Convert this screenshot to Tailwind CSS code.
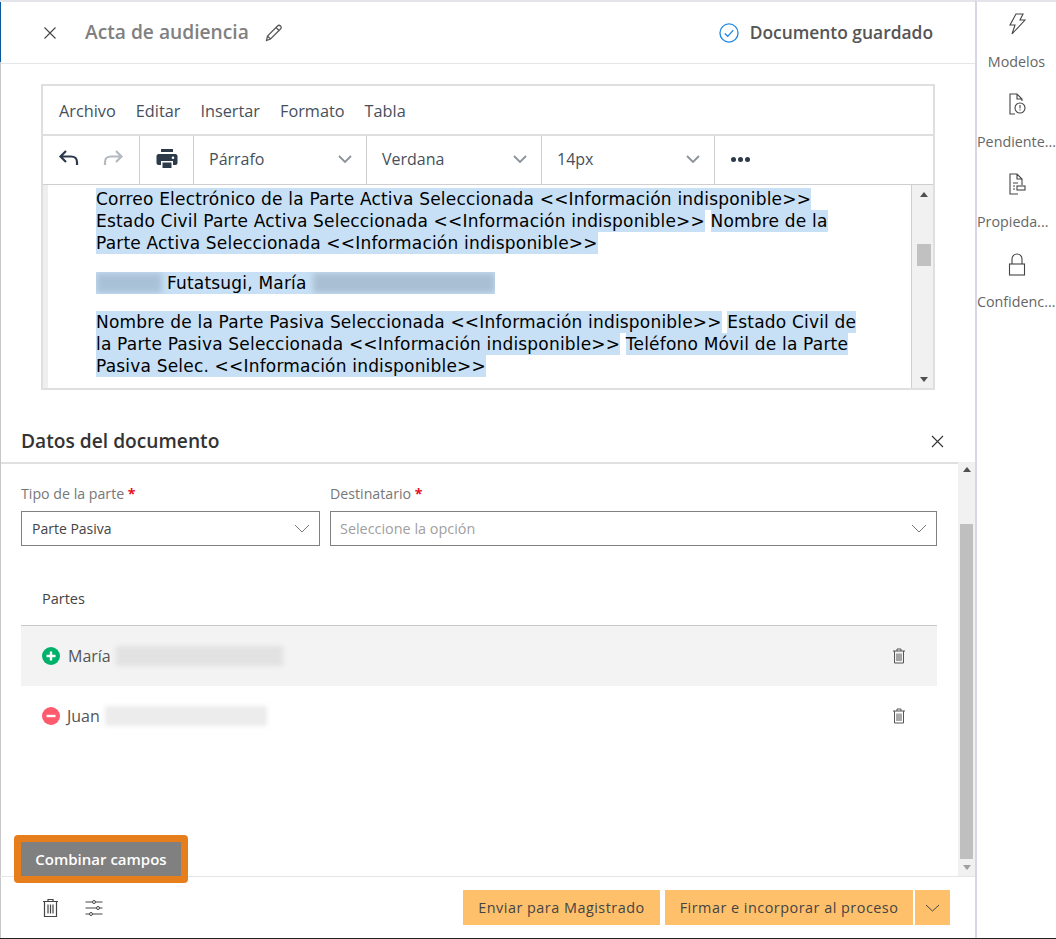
<!DOCTYPE html>
<html lang="es">
<head>
  <meta charset="UTF-8" />
  <title>Acta de audiencia</title>
  <script src="https://cdn.jsdelivr.net/npm/@tailwindcss/browser@4"></script>
</head>
<body class="bg-white">
<div class="flex h-[939px] w-[1056px] overflow-hidden border-b border-[#222] font-['Open_Sans',sans-serif]">

  <!-- Columna principal -->
  <div class="relative flex h-full w-[975px] flex-col border-t-2 border-t-[#e4e4ea]">
    <div class="absolute left-0 top-0 h-[60px] w-px bg-[#0a5a9c]"></div>
    <div class="absolute left-0 top-[60px] h-[877px] w-px bg-[#c8c8c8]"></div>

    <!-- Header -->
    <header class="flex h-[62px] shrink-0 items-center border-b border-[#e6e6e6] pl-[43px] pr-[42px]">
      <svg class="h-[14px] w-[14px]" viewBox="0 0 14 14" fill="none" stroke="#444" stroke-width="1.1"><path d="M1.5 1.5l11 11M12.5 1.5l-11 11"/></svg>
      <span class="ml-[28px] text-[19.2px] font-semibold text-[#808080]">Acta de audiencia</span>
      <svg class="ml-[16px] h-[18px] w-[18px]" viewBox="0 0 18 18" fill="none" stroke="#555" stroke-width="1.2"><path d="M1.5 16.5l1-4.5L12.5 2c1-1 2-1 3 0s1 2 0 3l-10 10zM2.5 12l3 3M11 3.5l3.5 3.5"/></svg>
      <svg class="ml-auto h-[20px] w-[20px]" viewBox="0 0 21 21" fill="none" stroke="#1e88e5" stroke-width="1.4"><circle cx="10.5" cy="10.5" r="9.5"/><path d="M6 11l3.200 3L15 7.500"/></svg>
      <span class="ml-[11px] text-[17.4px] font-semibold text-[#555]">Documento guardado</span>
    </header>

    <!-- Editor -->
    <section class="ml-[41px] mt-[20px] flex h-[306px] w-[894px] shrink-0 flex-col border-2 border-[#dfdfdf]">
      <nav class="flex h-[50px] shrink-0 items-center gap-[20px] border-b-2 border-[#dfdfdf] pl-[16px] pt-[2px] text-[16.3px] text-[#46505c]">
        <span>Archivo</span><span>Editar</span><span>Insertar</span><span>Formato</span><span>Tabla</span>
      </nav>
      <div class="flex h-[49px] shrink-0 items-center border-b border-[#cfcfcf] text-[16px] text-[#46505c]">
        <div class="flex h-full w-[97px] items-center gap-[22px] border-r border-[#cfcfcf] pb-[2px] pl-[15px]">
          <svg class="h-[22px] w-[22px]" viewBox="0 0 22 22" fill="none" stroke="#2c3a4a" stroke-width="2.2"><path d="M8 3L2.500 8.500 8 14M3 8.500h10c4 0 6 2.500 6 5.500v3"/></svg>
          <svg class="h-[22px] w-[22px]" viewBox="0 0 22 22" fill="none" stroke="#b4bac0" stroke-width="2.2"><path d="M14 3l5.500 5.500L14 14M19 8.500H9c-4 0-6 2.500-6 5.500v3"/></svg>
        </div>
        <div class="flex h-full w-[54px] items-center justify-center border-r border-[#cfcfcf] pb-[2px]">
          <svg class="h-[24px] w-[24px]" viewBox="0 0 24 24" fill="#2c3a4a"><path d="M6 2h12v3H6zM3.500 7h17c1 0 2 1 2 2v7c0 1-1 2-2 2H18v-4H6v4H3.500c-1 0-2-1-2-2V9c0-1 1-2 2-2zM7.500 15.500h9V21h-9zM18 9.500a1.300 1.300 0 100 2.600 1.300 1.300 0 000-2.600z"/></svg>
        </div>
        <div class="flex h-full w-[173px] items-center justify-between border-r border-[#cfcfcf] pb-[2px] pl-[15px] pr-[14px]">
          <span>Párrafo</span>
          <svg class="h-[10px] w-[14px]" viewBox="0 0 14 10" fill="none" stroke="#8a929a" stroke-width="1.800"><path d="M1 2l6 6 6-6"/></svg>
        </div>
        <div class="flex h-full w-[175px] items-center justify-between border-r border-[#cfcfcf] pb-[2px] pl-[15px] pr-[14px]">
          <span>Verdana</span>
          <svg class="h-[10px] w-[14px]" viewBox="0 0 14 10" fill="none" stroke="#8a929a" stroke-width="1.800"><path d="M1 2l6 6 6-6"/></svg>
        </div>
        <div class="flex h-full w-[173px] items-center justify-between border-r border-[#cfcfcf] pb-[2px] pl-[15px] pr-[14px]">
          <span>14px</span>
          <svg class="h-[10px] w-[14px]" viewBox="0 0 14 10" fill="none" stroke="#8a929a" stroke-width="1.800"><path d="M1 2l6 6 6-6"/></svg>
        </div>
        <div class="flex items-center gap-[2px] pb-[2px] pl-[16px]">
          <span class="h-[5px] w-[5px] rounded-full bg-[#2c3a4a]"></span>
          <span class="h-[5px] w-[5px] rounded-full bg-[#2c3a4a]"></span>
          <span class="h-[5px] w-[5px] rounded-full bg-[#2c3a4a]"></span>
        </div>
      </div>
      <div class="flex min-h-0 flex-1">
        <div class="flex-1 overflow-hidden border-l-[5px] border-[#efefef] pl-[48px] pt-[3px] font-['DejaVu_Sans',sans-serif] text-[17px] leading-[22px] tracking-[0.19px] text-black">
          <p><span class="bg-[#c8e0f6] py-px">Correo Electrónico de la Parte Activa Seleccionada &lt;&lt;Información indisponible&gt;&gt;</span><br><span class="bg-[#c8e0f6] py-px">Estado Civil Parte Activa Seleccionada &lt;&lt;Información indisponible&gt;&gt;</span> <span class="bg-[#c8e0f6] py-px">Nombre de la</span><br><span class="bg-[#c8e0f6] py-px">Parte Activa Seleccionada &lt;&lt;Información indisponible&gt;&gt;</span></p>
          <div class="mt-[18px] flex h-[22px] w-[399px] items-center overflow-hidden bg-[#c8e0f6]">
            <span class="h-[20px] w-[66px] shrink-0 bg-[#a9c1d6] blur-[3px]"></span>
            <span class="ml-[5px] shrink-0">Futatsugi, María</span>
            <span class="ml-[6px] h-[20px] flex-1 bg-[#a9bfd2] blur-[3px]"></span>
          </div>
          <p class="mt-[17px]"><span class="bg-[#c8e0f6] py-px">Nombre de la Parte Pasiva Seleccionada &lt;&lt;Información indisponible&gt;&gt;</span> <span class="bg-[#c8e0f6] py-px">Estado Civil de</span><br><span class="bg-[#c8e0f6] py-px">la Parte Pasiva Seleccionada &lt;&lt;Información indisponible&gt;&gt;</span> <span class="bg-[#c8e0f6] py-px">Teléfono Móvil de la Parte</span><br><span class="bg-[#c8e0f6] py-px">Pasiva Selec. &lt;&lt;Información indisponible&gt;&gt;</span></p>
        </div>
        <div class="flex w-[22px] shrink-0 flex-col items-center border-l border-[#cfcfcf] bg-[#f1f1f1] pl-[3px]">
          <span class="mt-[7px] h-0 w-0 border-x-[4px] border-b-[5px] border-x-transparent border-b-[#505050]"></span>
          <span class="mt-[47px] h-[22px] w-[14px] bg-[#c1c1c1]"></span>
          <span class="mt-auto mb-[6px] h-0 w-0 border-x-[4px] border-t-[5px] border-x-transparent border-t-[#505050]"></span>
        </div>
      </div>
    </section>

    <!-- Datos del documento -->
    <div class="mt-[31px] flex h-[41px] shrink-0 items-center justify-between pl-[21px] pr-[31px]">
      <h2 class="text-[19.2px] font-semibold text-[#333]">Datos del documento</h2>
      <svg class="h-[13px] w-[13px]" viewBox="0 0 13 13" fill="none" stroke="#333" stroke-width="1.100"><path d="M1 1l11 11M12 1L1 12"/></svg>
    </div>
    <div class="flex min-h-0 flex-1">
      <div class="flex-1 border-t-2 border-[#e0e0e0] pl-[21px] pr-[21px] pt-[20px]">
        <div class="flex gap-[10px]">
          <div class="w-[299px]">
            <label class="block text-[14.2px] leading-[20px] text-[#777]">Tipo de la parte <span class="font-bold text-[#e81123]">*</span></label>
            <div class="mt-[7px] flex h-[35px] items-center justify-between border border-[#808080] pl-[10px] pr-[9px] text-[14px] text-[#444]">
              <span>Parte Pasiva</span>
              <svg class="h-[10px] w-[16px]" viewBox="0 0 16 10" fill="none" stroke="#777" stroke-width="1"><path d="M1 1l7 7 7-7"/></svg>
            </div>
          </div>
          <div class="w-[607px]">
            <label class="block text-[14.2px] leading-[20px] text-[#777]">Destinatario <span class="font-bold text-[#e81123]">*</span></label>
            <div class="mt-[7px] flex h-[35px] items-center justify-between border border-[#808080] pl-[9px] pr-[9px] text-[14.4px] text-[#a0a0a0]">
              <span>Seleccione la opción</span>
              <svg class="h-[10px] w-[16px]" viewBox="0 0 16 10" fill="none" stroke="#777" stroke-width="1"><path d="M1 1l7 7 7-7"/></svg>
            </div>
          </div>
        </div>
        <div class="mt-[35px] flex h-[36px] items-center pl-[21px] text-[14.5px] font-medium text-[#444]">Partes</div>
        <div class="mt-[8px] w-[916px] border-t border-[#c8c8c8]">
          <div class="flex h-[60px] items-center bg-[#f3f3f3] pl-[21px] pr-[31px]">
            <svg class="h-[18px] w-[18px]" viewBox="0 0 18 18"><circle cx="9" cy="9" r="9" fill="#00b16a"/><path d="M9 4.500v9M4.500 9h9" stroke="#fff" stroke-width="2.400"/></svg>
            <span class="ml-[8px] text-[16px] text-[#555]">María</span>
            <span class="ml-[5px] h-[20px] w-[167px] bg-[#e2e2e2] blur-[2px]"></span>
            <svg class="ml-auto h-[16px] w-[14px]" viewBox="0 0 14 16" fill="none" stroke="#555" stroke-width="1"><path d="M1 3h12M5 3V1h4v2M2.500 3v12h9V3M5 5.500v7.500M7 5.500v7.500M9 5.500v7.500"/></svg>
          </div>
          <div class="flex h-[60px] items-center pl-[21px] pr-[31px]">
            <svg class="h-[18px] w-[18px]" viewBox="0 0 18 18"><circle cx="9" cy="9" r="9" fill="#ff5b6e"/><path d="M4.500 9h9" stroke="#fff" stroke-width="2.400"/></svg>
            <span class="ml-[7px] text-[16px] text-[#555]">Juan</span>
            <span class="ml-[5px] h-[20px] w-[162px] bg-[#ececec] blur-[2px]"></span>
            <svg class="ml-auto h-[16px] w-[14px]" viewBox="0 0 14 16" fill="none" stroke="#555" stroke-width="1"><path d="M1 3h12M5 3V1h4v2M2.500 3v12h9V3M5 5.500v7.500M7 5.500v7.500M9 5.500v7.500"/></svg>
          </div>
        </div>
      </div>
      <div class="flex w-[17px] shrink-0 flex-col items-center bg-[#f1f1f1]">
        <span class="mt-[5px] h-0 w-0 border-x-[4px] border-b-[5px] border-x-transparent border-b-[#505050]"></span>
        <span class="mt-[52px] h-[335px] w-[13px] bg-[#bfbfbf]"></span>
        <span class="mt-[6px] h-0 w-0 border-x-[4px] border-t-[5px] border-x-transparent border-t-[#a0a0a0]"></span>
      </div>
    </div>

    <!-- Footer -->
    <footer class="relative flex h-[62px] shrink-0 items-center border-t border-[#e6e6e6] pl-[42px] pr-[25px]">
      <svg class="h-[20px] w-[17px]" viewBox="0 0 17 20" fill="none" stroke="#444" stroke-width="1.200"><path d="M1 3.500h15M6 3.500V1.500h5v2M2.500 3.500v15h12v-15M6 6.500v9M8.500 6.500v9M11 6.500v9"/></svg>
      <svg class="ml-[26px] h-[18px] w-[18px]" viewBox="0 0 18 18" fill="none" stroke="#444" stroke-width="1"><path d="M0.500 3h7M10.500 3h7M0.500 9h11M14.500 9h3M0.500 15h4M7.500 15h10"/><circle cx="9" cy="3" r="1.500"/><circle cx="13" cy="9" r="1.500"/><circle cx="6" cy="15" r="1.500"/></svg>
      <div class="ml-auto flex gap-[5px] text-[14.4px] font-medium tracking-[0.5px] text-[#444]">
        <button class="flex h-[35px] w-[197px] items-center justify-center bg-[#ffc06c]">Enviar para Magistrado</button>
        <div class="flex gap-[2px]">
          <button class="flex h-[35px] w-[248px] items-center justify-center bg-[#ffc06c]">Firmar e incorporar al proceso</button>
          <button class="flex h-[35px] w-[35px] items-center justify-center bg-[#ffc06c]">
            <svg class="h-[8px] w-[15px]" viewBox="0 0 15 8" fill="none" stroke="#444" stroke-width="1"><path d="M1 1l6.500 6L14 1"/></svg>
          </button>
        </div>
      </div>
      <!-- Boton resaltado -->
      <div class="absolute left-[14px] top-[-42px] rounded-[4px] border-[7px] border-[#e67e1c]">
        <button class="flex h-[34px] w-[160px] items-center justify-center bg-[#808080] text-[15px] font-semibold text-white">Combinar campos</button>
      </div>
    </footer>
  </div>

  <!-- Panel lateral -->
  <aside class="flex w-[81px] shrink-0 flex-col overflow-hidden border-l-2 border-t-2 border-l-[#d6d6e4] border-t-[#e4e4ea] text-[14.3px] text-[#666]">
    <div class="flex h-[80px] shrink-0 flex-col items-center pt-[10px]">
      <svg class="h-[24px] w-[18px]" viewBox="0 0 18 24" fill="none" stroke="#444" stroke-width="1.100"><path d="M8 2h7l-3 6h5L4 22l3-9H2z"/></svg>
      <span class="mt-[16px] w-full text-center leading-[20px]">Modelos</span>
    </div>
    <div class="flex h-[80px] shrink-0 flex-col items-center pt-[10px]">
      <svg class="h-[24px] w-[18px]" viewBox="0 0 18 24" fill="none" stroke="#444" stroke-width="1.100"><path d="M7 22H2V2h7l5 5v2M9 2v5h5"/><circle cx="12" cy="16" r="5"/><path d="M12 13v3.500M12 17.500v1"/></svg>
      <span class="mt-[16px] w-full whitespace-nowrap leading-[20px]">Pendiente...</span>
    </div>
    <div class="flex h-[80px] shrink-0 flex-col items-center pt-[10px]">
      <svg class="h-[24px] w-[18px]" viewBox="0 0 18 24" fill="none" stroke="#444" stroke-width="1.100"><path d="M10 22H2V2h7l5 5v6M9 2v5h5M5 11h5M5 14h2M5 17h2"/><rect x="9" y="14" width="8" height="4"/></svg>
      <span class="mt-[16px] w-full whitespace-nowrap leading-[20px]">Propieda...</span>
    </div>
    <div class="flex h-[80px] shrink-0 flex-col items-center pt-[10px]">
      <svg class="h-[24px] w-[18px]" viewBox="0 0 18 24" fill="none" stroke="#444" stroke-width="1.100"><path d="M4 12V7a5 5 0 0110 0v5"/><rect x="1.500" y="12" width="15" height="11"/></svg>
      <span class="mt-[16px] w-full whitespace-nowrap leading-[20px]">Confidenc...</span>
    </div>
  </aside>
</div>
</body>
</html>
